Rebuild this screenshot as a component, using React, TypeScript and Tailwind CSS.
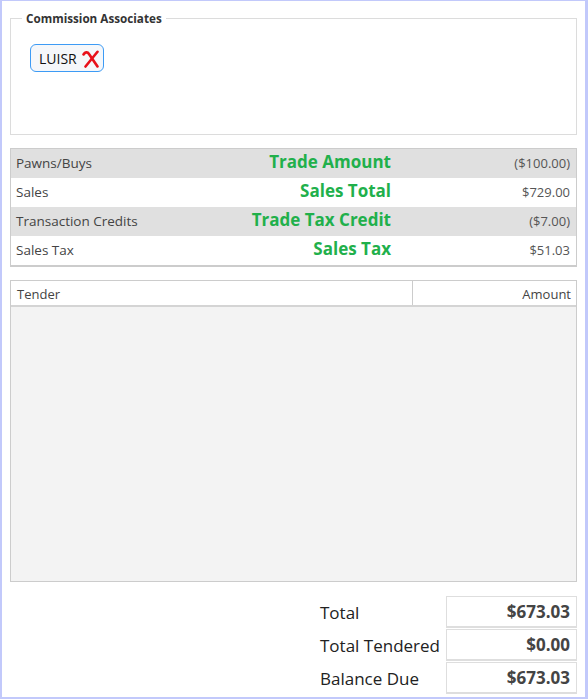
import React from "react";

const font = { fontFamily: '"Open Sans", "Noto Sans", sans-serif' };

function RedX() {
  return (
    <svg width="18" height="18" viewBox="0 0 18 18" className="ml-[5px] mt-[1px]">
      <path d="M1.5 4.5 C3 2 5.5 1.5 7 4 L15.5 16.5" fill="none" stroke="#e8101a" strokeWidth="2.6" strokeLinecap="round" />
      <path d="M15.5 1.8 L3.5 16.5" fill="none" stroke="#e8101a" strokeWidth="2.6" strokeLinecap="round" />
    </svg>
  );
}

const rows = [
  { label: "Pawns/Buys", mid: "Trade Amount", value: "($100.00)", gray: true },
  { label: "Sales", mid: "Sales Total", value: "$729.00", gray: false },
  { label: "Transaction Credits", mid: "Trade Tax Credit", value: "($7.00)", gray: true },
  { label: "Sales Tax", mid: "Sales Tax", value: "$51.03", gray: false },
];

const totals = [
  { label: "Total", value: "$673.03" },
  { label: "Total Tendered", value: "$0.00" },
  { label: "Balance Due", value: "$673.03" },
];

export default function App() {
  return (
    <div
      className="w-[588px] h-[699px] bg-white border-l-2 border-r-[3px] border-b-2 border-t border-[#c2c9fb] box-border pl-[8px] pr-[8px] pt-[9px]"
      style={font}
    >
      <fieldset className="border border-[#dcdcdc] h-[125px] m-0 pl-[19px] pr-[17px] pt-0">
        <legend className="text-[11.7px] font-bold text-[#333] px-[4px] ml-[-8px] leading-[16px]">
          Commission Associates
        </legend>
        <div className="mt-[18px] inline-flex items-center h-[28px] w-[74px] border border-[#3d9bf5] rounded-[6px] bg-[#f5f7fa] pl-[8px] text-[14px] text-[#111]">
          LUISR
          <RedX />
        </div>
      </fieldset>

      <div className="mt-[13px] border border-[#cccccc] border-b-2">
        {rows.map((r) => (
          <div
            key={r.label}
            className={`flex items-center h-[29px] ${r.gray ? "bg-[#e0e0e0]" : "bg-white"}`}
          >
            <div className="w-[200px] pl-[5px] text-[13.5px] text-[#444]">{r.label}</div>
            <div className="w-[180px] flex justify-end text-[17px] font-bold text-[#21b04b] whitespace-nowrap leading-[20px] mt-[-3px]">
              {r.mid}
            </div>
            <div className="flex-1 text-right pr-[6px] text-[13px] text-[#555]">{r.value}</div>
          </div>
        ))}
      </div>

      <div className="mt-[13px] border border-[#cccccc] h-[302px] flex flex-col">
        <div className="flex h-[26px] border-b-2 border-[#d4d4d4] bg-white text-[13px] text-[#444]">
          <div className="w-[402px] border-r border-[#cccccc] pl-[6px] pt-[4px] flex items-center">Tender</div>
          <div className="flex-1 text-right pr-[5px] pt-[4px] flex items-center justify-end">Amount</div>
        </div>
        <div className="flex-1 bg-[#f3f3f3]" />
      </div>

      <div className="mt-[14px] flex flex-col items-end gap-[1px]">
        {totals.map((t) => (
          <div key={t.label} className="flex items-center">
            <div className="w-[126px] text-[17px] text-[#222] pt-[2px]">{t.label}</div>
            <div className="w-[131px] h-[32px] border border-[#dedede] border-b-2 flex items-center justify-end pr-[6px] pt-[1px] text-[17px] font-bold text-[#444]">
              {t.value}
            </div>
          </div>
        ))}
      </div>
    </div>
  );
}
